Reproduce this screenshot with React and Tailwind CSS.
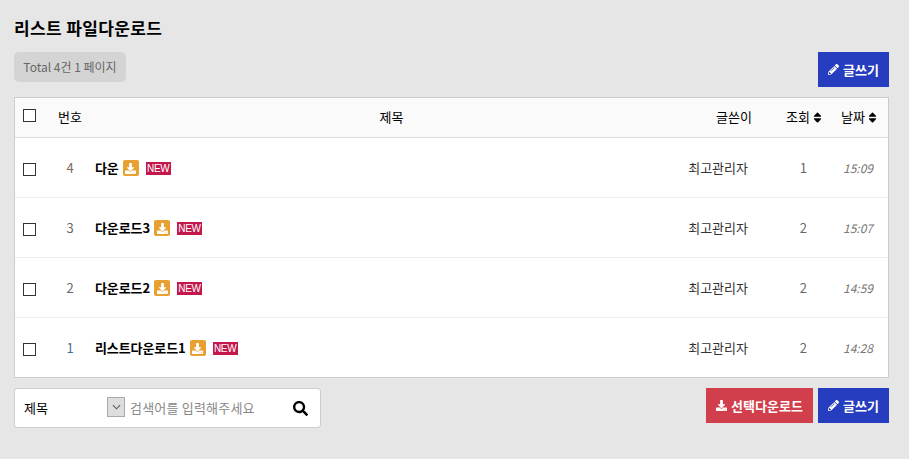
import React from 'react';
import { FaDownload, FaPencilAlt, FaSearch, FaSort } from 'react-icons/fa';

const rows = [
  { num: 4, title: '다운', writer: '최고관리자', hit: 1, date: '15:09' },
  { num: 3, title: '다운로드3', writer: '최고관리자', hit: 2, date: '15:07' },
  { num: 2, title: '다운로드2', writer: '최고관리자', hit: 2, date: '14:59' },
  { num: 1, title: '리스트다운로드1', writer: '최고관리자', hit: 2, date: '14:28' },
];

function Check() {
  return <span className="block w-[13px] h-[13px] border border-[#333] bg-white"></span>;
}

function WriteButton() {
  return (
    <button className="h-[35px] w-[71px] bg-[#253dbe] text-white text-[13px] font-bold flex items-center justify-center gap-[4px]">
      <FaPencilAlt className="w-[11px] h-[11px]" />
      글쓰기
    </button>
  );
}

export default function App() {
  return (
    <div className="h-[459px] bg-[#e6e6e6] pl-[14px] pr-[20px] overflow-hidden text-[13px] text-black font-['Noto_Sans_CJK_KR','Noto_Sans',sans-serif]">
      <h2 className="pt-[17px] h-[52px] text-[17px] leading-[22px] font-bold tracking-[0.35px] text-black">리스트 파일다운로드</h2>

      <div className="flex justify-between items-start h-[45px]">
        <div className="h-[30px] w-[112px] rounded-[5px] bg-[#d4d4d4] text-[#666] text-[12px] flex items-center justify-center">
          Total 4건 1 페이지
        </div>
        <WriteButton />
      </div>

      <div className="border border-[#ccc] bg-white">
        <div className="flex items-center h-[40px] bg-[#fafafa] border-b border-[#ddd]">
          <div className="w-[30px] pl-[8px] -mt-[4px]"><Check /></div>
          <div className="w-[50px] text-center -mt-[1px]">번호</div>
          <div className="flex-1 text-center -mt-[1px] pr-[16px]">제목</div>
          <div className="w-[90px] text-right pr-[12px] -mt-[1px] ml-[-30px]">글쓴이</div>
          <div className="w-[62px] flex items-center justify-end gap-[3px] pr-[4px] -mt-[1px]">조회<FaSort className="w-[9px] h-[13px]" /></div>
          <div className="w-[62px] flex items-center justify-end gap-[3px] pr-[11px] -mt-[1px]">날짜<FaSort className="w-[9px] h-[13px]" /></div>
        </div>
        {rows.map((r, i) => (
          <div key={r.num} className={'flex items-center ' + (i < 3 ? 'h-[60px] border-b border-[#eee]' : 'h-[59px]')}>
            <div className="w-[30px] pl-[8px] mt-[3px]"><Check /></div>
            <div className={'w-[50px] text-center ' + (r.num === 1 ? 'text-[#4a6a9c]' : r.num === 4 ? 'text-[#7a6a5a]' : 'text-[#666]')}>{r.num}</div>
            <div className="flex-1 flex items-center">
              <span className="font-bold text-black tracking-[-0.1px]">{r.title}</span>
              <span className="ml-[4px] mt-[1px] w-[16px] h-[16px] rounded-[2px] bg-[#e8a030] text-white flex items-center justify-center">
                <FaDownload className="w-[11px] h-[11px]" />
              </span>
              <span className="ml-[7px] mt-[1px] w-[25px] h-[13px] bg-[#c4174b] text-white text-[10px] leading-[13px] text-center tracking-[-0.3px] font-['Liberation_Sans',sans-serif]">NEW</span>
            </div>
            <div className="w-[90px] text-right text-[#333] pr-[16px]">{r.writer}</div>
            <div className="w-[50px] text-right text-[#666] pr-[7px]">{r.hit}</div>
            <div className="w-[74px] text-right italic text-[#777] text-[12px] pr-[15px]">{r.date}</div>
          </div>
        ))}
      </div>

      <div className="flex justify-between items-start mt-[10px]">
        <div className="h-[40px] w-[307px] rounded-[3px] border border-[#ccc] bg-white flex items-center">
          <span className="w-[92px] pl-[9px] -mt-[1px]">제목</span>
          <span className="w-[18px] h-[20px] -mt-[2px] border border-[#aaa] bg-[#ddd] flex items-center justify-center">
            <svg viewBox="0 0 10 6" className="w-[9px] h-[6px]" fill="none" stroke="#555" strokeWidth="1.2"><path d="M1 1l4 4 4-4" /></svg>
          </span>
          <span className="ml-[5px] w-[163px] text-[#888] text-[13px] tracking-[0.2px] -mt-[1px]">검색어를 입력해주세요</span>
          <FaSearch className="w-[15px] h-[15px] text-black" />
        </div>
        <div className="flex gap-[5px]">
          <button className="h-[35px] w-[107px] bg-[#d23f4c] text-white text-[13px] font-bold flex items-center justify-center gap-[4px]">
            <FaDownload className="w-[11px] h-[11px]" />
            선택다운로드
          </button>
          <WriteButton />
        </div>
      </div>
    </div>
  );
}
